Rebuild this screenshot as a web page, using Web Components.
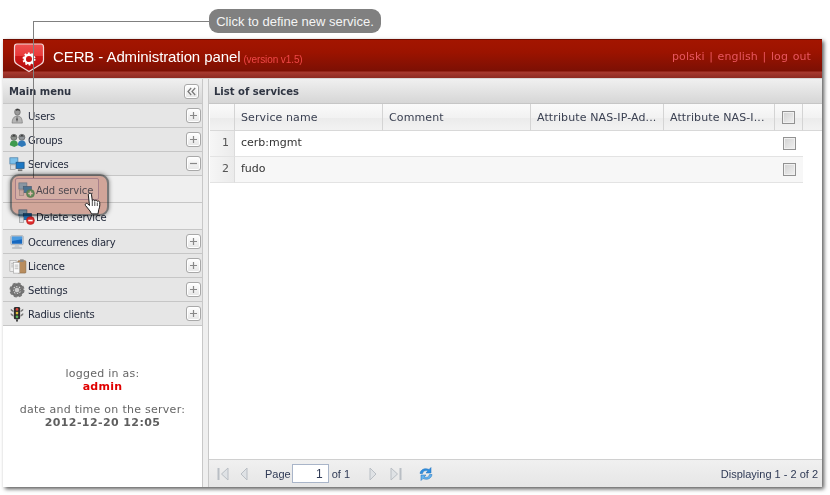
<!DOCTYPE html>
<html><head><meta charset="utf-8"><title>CERB</title>
<style>
html,body{margin:0;padding:0;background:#fff;width:830px;height:495px;overflow:hidden}
</style></head>
<body>
<cerb-app></cerb-app>
<script>
const ICONS={
users:`<svg width="18" height="18" viewBox="0 0 18 18"><ellipse cx="9.500" cy="4.500" rx="3.200" ry="3.600" fill="#9a9a9a" stroke="#555" stroke-width=".6"/><path d="M8 3.500c1-1.500 3-1 4 0v-1.500l-2-1-2 .5z" fill="#333"/><path d="M3.500 17c0-5 2-8 6-8s5.500 3 5.500 8z" fill="#b5b5b5" stroke="#666" stroke-width=".6"/><path d="M9 9l1 4-1 3-1-3z" fill="#555"/></svg>`,
groups:`<svg width="20" height="18" viewBox="0 0 20 18"><circle cx="5.500" cy="6" r="3.400" fill="#8a8f8a" stroke="#444" stroke-width=".6"/><circle cx="14.500" cy="6" r="3.400" fill="#8f9499" stroke="#444" stroke-width=".6"/><path d="M1 15c0-4 2-5.500 4.500-5.500S10 11 10 15l-4 2z" fill="#3f9a4d"/><path d="M10 15c0-4 2-5.500 4.500-5.500S19 11 19 15l-4.500 2z" fill="#2f78b8"/><path d="M3 5l2.500-2L8 5z M12 5l2.500-2L17 5z" fill="#333"/></svg>`,
services:`<svg width="18" height="18" viewBox="0 0 18 18"><rect x="1" y="2" width="9" height="7" fill="#7cc0ea" stroke="#4a7da6" stroke-width=".8"/><rect x="8" y="7" width="9" height="7" fill="#1c78c4" stroke="#1b4f80" stroke-width=".8"/><rect x="1.500" y="10" width="6" height="5" fill="#d8dde2" stroke="#888" stroke-width=".6"/><path d="M10 15h5v2h-5z" fill="#777"/></svg>`,
add:`<svg width="20" height="18" viewBox="0 0 20 18"><rect x="1" y="1" width="9" height="7" fill="#7cc0ea" stroke="#4a7da6" stroke-width=".8"/><rect x="6" y="5" width="9" height="7" fill="#1c78c4" stroke="#1b4f80" stroke-width=".8"/><rect x="1.500" y="9" width="5" height="6" fill="#d8dde2" stroke="#888" stroke-width=".6"/><circle cx="14" cy="13" r="4.500" fill="#3fa448" stroke="#2c7a33" stroke-width=".6"/><path d="M14 10.500v5M11.500 13h5" stroke="#fff" stroke-width="1.600"/></svg>`,
del:`<svg width="20" height="18" viewBox="0 0 20 18"><rect x="1" y="1" width="9" height="7" fill="#7cc0ea" stroke="#4a7da6" stroke-width=".8"/><rect x="6" y="5" width="9" height="7" fill="#1c78c4" stroke="#1b4f80" stroke-width=".8"/><rect x="1.500" y="9" width="5" height="6" fill="#d8dde2" stroke="#888" stroke-width=".6"/><circle cx="14" cy="13" r="4.500" fill="#e02b2b" stroke="#a61c1c" stroke-width=".6"/><path d="M11.500 13h5" stroke="#fff" stroke-width="1.800"/></svg>`,
diary:`<svg width="18" height="18" viewBox="0 0 18 18"><rect x="2" y="2" width="14" height="10" rx="1" fill="#dfe3e6" stroke="#8a9299" stroke-width=".7"/><rect x="3.200" y="3" width="11.600" height="8" fill="#1668c0"/><path d="M3.200 3h11.600v3L3.200 8z" fill="#4a9be0"/><path d="M7 12h4l1 3H6z" fill="#c8cccf"/><path d="M3.500 15h11v1.500h-11z" fill="#aeb3b7"/></svg>`,
licence:`<svg width="20" height="18" viewBox="0 0 20 18"><rect x="10" y="3" width="9" height="14" rx="1" fill="#b98d5e" stroke="#7a5a38" stroke-width=".6"/><rect x="12.500" y="1.500" width="4" height="3" fill="#888"/><rect x="1" y="3" width="7" height="12" fill="#eee" stroke="#999" stroke-width=".6"/><rect x="5" y="5" width="7" height="12" fill="#fafafa" stroke="#999" stroke-width=".6"/><path d="M6.500 8h4M6.500 10h4M6.500 12h4M2.500 6h2M2.500 8h2M2.500 10h2" stroke="#999" stroke-width=".7"/></svg>`,
settings:`<svg width="18" height="18" viewBox="0 0 18 18"><circle cx="9" cy="9" r="6" fill="none" stroke="#6e6e6e" stroke-width="3"/><circle cx="9" cy="9" r="6" fill="none" stroke="#777" stroke-width="5" stroke-dasharray="2.600 2.110"/><circle cx="9" cy="9" r="3.200" fill="#cfcfcf" stroke="#555" stroke-width=".8"/></svg>`,
radius:`<svg width="18" height="18" viewBox="0 0 18 18"><path d="M2 3l3 2v2L2 5zM16 3l-3 2v2l3-2zM2 8l3 2v2L2 10zM16 8l-3 2v2l3-2z" fill="#777"/><rect x="5.500" y="1" width="7" height="14" rx="1.500" fill="#2e2e2e"/><rect x="8" y="15" width="2" height="2.500" fill="#333"/><circle cx="9" cy="3.800" r="1.500" fill="#d9453a"/><circle cx="9" cy="8" r="1.500" fill="#e2c23b"/><circle cx="9" cy="12.200" r="1.500" fill="#5cb85c"/></svg>`
};

function el(name,cls){customElements.define(name,cls)}
function shadow(host,html){host.attachShadow({mode:'open'}).innerHTML=html}

el('cerb-logo',class extends HTMLElement{connectedCallback(){shadow(this,`<style>:host{display:block;width:32px;height:30px}svg{display:block}</style>
<svg width="32" height="30" viewBox="0 0 32 30"><defs><linearGradient id="s" x1="0" y1="0" x2="0" y2="1"><stop offset="0" stop-color="#f05050"/><stop offset=".42" stop-color="#e83a3a"/><stop offset=".43" stop-color="#d01818"/><stop offset="1" stop-color="#b00c0c"/></linearGradient></defs>
<path d="M4 1h24q2.500 0 2.500 3v13q0 3-3 4.500L16 28.500 4.500 21.500q-3-1.500-3-4.500V4Q1.500 1 4 1z" fill="url(#s)" stroke="#f3d9d9" stroke-width="1.200"/>
<circle cx="16" cy="16" r="4.200" fill="none" stroke="#fff" stroke-width="2.400"/><circle cx="16" cy="16" r="5.600" fill="none" stroke="#fff" stroke-width="1.800" stroke-dasharray="1.800 1.720"/><circle cx="15" cy="17" r="1.600" fill="#c01212"/></svg>`)}});

el('cerb-header',class extends HTMLElement{connectedCallback(){shadow(this,`<style>
:host{display:block;height:40px;box-sizing:border-box;border-top:1px solid #6e0d00;background:linear-gradient(#a31500 0,#9c1300 12px,#7c1004 31px,#a83a30 32px,#8d2a22 38px,#d8d8d8 38px)}
.r{display:flex;align-items:center;height:31px;padding:0 11px 0 10px}
.t{font:15px "Liberation Sans",Arial,sans-serif;color:#fff;margin-left:8px;position:relative;top:1px;letter-spacing:-.1px}
.v{font:10px "Liberation Sans",Arial,sans-serif;color:#f04848;margin-left:3px;position:relative;top:4px;letter-spacing:-.1px}
.sp{flex:1}.l{font:11px "DejaVu Sans",Verdana,sans-serif;color:#e8565e;letter-spacing:.01em;position:relative;top:1px;word-spacing:1px}
cerb-logo{position:relative;top:2px}
</style><div class="r"><cerb-logo></cerb-logo><span class="t">CERB - Administration panel</span><span class="v">(version v1.5)</span><span class="sp"></span><span class="l">polski | english | log out</span></div>`)}});

el('tool-btn',class extends HTMLElement{connectedCallback(){const k=this.getAttribute('kind');
const g=k==='plus'?'<path d="M6.500 3v7M3 6.500h7" stroke="#888" stroke-width="1.200"/>':k==='minus'?'<path d="M3 6.500h7" stroke="#888" stroke-width="1.200"/>':'<path d="M6.200 3L3 6.500 6.200 10M10.200 3L7 6.500l3.200 3.500" stroke="#777" stroke-width="1.200" fill="none"/>';
shadow(this,`<style>:host{display:block;width:13px;height:13px;border:1px solid #a8a8a8;border-radius:3px;background:linear-gradient(#fff,#e6e6e6);box-shadow:inset 0 0 0 1px #fff}svg{display:block}</style><svg width="13" height="13" viewBox="0 0 13 13">${g}</svg>`)}});

el('menu-row',class extends HTMLElement{connectedCallback(){const i=this.getAttribute('icon'),t=this.getAttribute('toggle');
shadow(this,`<style>
:host{display:flex;align-items:center;height:23px;box-sizing:content-box;border-bottom:1px solid #c6c6c6;background:#e6e6e6;font:10px "DejaVu Sans",Verdana,sans-serif;letter-spacing:-.2px;color:#1f2638;padding-left:6px}
.i{width:19px;height:16px;flex:none;display:flex}.i svg{height:16px;width:auto}.x{flex:1;padding-top:2px}
tool-btn{margin-right:1px}
</style><span class="i">${ICONS[i]}</span><span class="x"><slot></slot></span><tool-btn kind="${t}"></tool-btn>`)}});

el('sub-row',class extends HTMLElement{connectedCallback(){const i=this.getAttribute('icon');
shadow(this,`<style>
:host{display:flex;align-items:center;box-sizing:border-box;border-bottom:1px solid #c6c6c6;background:#efefef;font:10px "DejaVu Sans",Verdana,sans-serif;letter-spacing:-.1px;color:#1f2638;padding:2px 0 0 15px}
.i{width:18px;height:16px;flex:none;display:flex}.i svg{height:16px;width:auto}
</style><span class="i">${ICONS[i]}</span><slot></slot>`)}});

el('side-bar',class extends HTMLElement{connectedCallback(){shadow(this,`<style>
:host{display:flex;flex-direction:column;width:200px;flex:none;background:#fff;border-right:1px solid #c8c8c8;box-sizing:border-box}
.h{border-bottom:1px solid #c6c6c6;background:linear-gradient(#f0f0f0,#d6d6d6);display:flex;align-items:center;padding:1px 3px 0 6px;box-sizing:border-box;height:25px;font:bold 10px "DejaVu Sans",Verdana,sans-serif;color:#2f3542;justify-content:space-between}
.h tool-btn{margin-top:-1px}
.info{flex:1;display:flex;flex-direction:column;align-items:center;padding-top:41px;font:11px/13px "DejaVu Sans",Verdana,sans-serif;letter-spacing:.27px;color:#666;text-align:center}
.a{color:#e00000;font-weight:bold}.d{font-weight:bold;color:#5f5f5f;letter-spacing:.4px}.g{margin-top:10px}
sub-row.one{height:27px}sub-row.two{height:27px}
</style>
<div class="h"><span>Main menu</span><tool-btn kind="collapse"></tool-btn></div>
<menu-row icon="users" toggle="plus">Users</menu-row>
<menu-row icon="groups" toggle="plus">Groups</menu-row>
<menu-row icon="services" toggle="minus">Services</menu-row>
<sub-row class="one" icon="add">Add service</sub-row>
<sub-row class="two" icon="del">Delete service</sub-row>
<menu-row icon="diary" toggle="plus">Occurrences diary</menu-row>
<menu-row icon="licence" toggle="plus">Licence</menu-row>
<menu-row icon="settings" toggle="plus">Settings</menu-row>
<menu-row icon="radius" toggle="plus">Radius clients</menu-row>
<div class="info"><span>logged in as:</span><span class="a">admin</span><span class="g">date and time on the server:</span><span class="d">2012-12-20 12:05</span></div>`)}});

el('check-box',class extends HTMLElement{connectedCallback(){shadow(this,`<style>:host{display:block;width:11px;height:11px;border:1px solid #929292;background:linear-gradient(135deg,#d2d2d2,#f0f0f0);box-shadow:inset 0 0 0 1px #f0f0f0}</style>`)}});

el('data-grid',class extends HTMLElement{connectedCallback(){
const cols='25px 148px 148px 133px 111px 28px 19px';
const hs=['','Service name','Comment','Attribute NAS-IP-Ad...','Attribute NAS-I...'];
shadow(this,`<style>
:host{display:block;flex:1;background:#fff;padding-left:1px;font:11px "DejaVu Sans",Verdana,sans-serif;color:#333}
.g{display:grid;grid-template-columns:${cols}}
.hd{height:27px;background:linear-gradient(#fafafa 0,#f2f2f2 50%,#ebebeb 50%,#f3f3f3 100%)}
.hd>div{display:flex;align-items:center;padding:1px 0 0 6px;border-right:1px solid #d4d4d4;border-bottom:1px solid #d8d8d8;box-sizing:border-box;white-space:nowrap;overflow:hidden;color:#3b4152;letter-spacing:.01em}
.hd>div:last-child{border-right:0;padding:0}
.hd>div.c,.row>div.c{justify-content:center;padding:0}
.row{height:26px;grid-template-columns:25px 148px 392px 28px;width:593px}
.row>div{display:flex;align-items:center;box-sizing:border-box;border-bottom:1px solid #e3e3e3;padding:0 0 2px 6px}
.row>div.n{justify-content:flex-end;padding:0 5px 2px 0;background:linear-gradient(90deg,#f6f6f6,#ebebeb);border-right:1px solid #dcdcdc;color:#555}
.row.alt>div:not(.n){background:#f7f7f7}
</style>
<div class="g hd">${hs.map(h=>`<div>${h}</div>`).join('')}<div class="c"><check-box></check-box></div><div></div></div>
<div class="g row"><div class="n">1</div><div>cerb:mgmt</div><div></div><div class="c"><check-box></check-box></div></div>
<div class="g row alt"><div class="n">2</div><div>fudo</div><div></div><div class="c"><check-box></check-box></div></div>`)}});

el('grid-pager',class extends HTMLElement{connectedCallback(){
const c='#b9bec4';
shadow(this,`<style>
:host{display:flex;align-items:center;height:27px;border-top:1px solid #d0d0d0;background:linear-gradient(#f0f0f0,#e6e6e6);font:11px "Liberation Sans",Arial,sans-serif;color:#2f3a55;padding:0 4px 0 8px;box-sizing:content-box}
svg{display:block;flex:none}
.in{width:37px;height:19px;box-sizing:border-box;border:1px solid #a9b5c9;background:#fff;text-align:right;padding:2px 5px;line-height:14px;margin:0 3px 0 1px;font-size:12px}
.sp{flex:1}
</style>
<svg width="12" height="14" viewBox="0 0 12 14"><path d="M1.500 1v12" stroke="${c}" stroke-width="2"/><path d="M11 1L4.500 7l6.500 6z" fill="#dfe2e5" stroke="${c}"/></svg>
<svg width="8" height="14" viewBox="0 0 8 14" style="margin-left:11px"><path d="M7 1L1 7l6 6z" fill="#dfe2e5" stroke="${c}"/></svg>
<span style="margin-left:17px">Page</span><span class="in">1</span><span>of 1</span>
<svg width="8" height="14" viewBox="0 0 8 14" style="margin-left:19px"><path d="M1 1l6 6-6 6z" fill="#dfe2e5" stroke="${c}"/></svg>
<svg width="12" height="14" viewBox="0 0 12 14" style="margin-left:13px"><path d="M1 1l6.500 6L1 13z" fill="#dfe2e5" stroke="${c}"/><path d="M10.500 1v12" stroke="${c}" stroke-width="2"/></svg>
<svg width="16" height="16" viewBox="0 0 16 16" style="margin-left:16px"><path d="M2 7.500C2.500 3.500 7 1.500 11 3.500L13 1.500V7H8l1.800-2C7.500 4 5 5 4.500 7.500z" fill="#2f8fe0" stroke="#1f6fb8" stroke-width=".5"/><path d="M14 8.500C13.500 12.500 9 14.500 5 12.500L3 14.500V9h5l-1.800 2C8.500 12 11 11 11.500 8.500z" fill="#63b3ee" stroke="#1f6fb8" stroke-width=".5"/></svg>
<span class="sp"></span><span>Displaying 1 - 2 of 2</span>`)}});

el('main-panel',class extends HTMLElement{connectedCallback(){shadow(this,`<style>
:host{display:flex;flex-direction:column;flex:1;min-width:0;background:#fff;box-sizing:border-box;border-left:1px solid #c8c8c8}
.h{height:25px;box-sizing:border-box;flex:none;border-bottom:1px solid #c6c6c6;background:linear-gradient(#f0f0f0,#d6d6d6);display:flex;align-items:center;padding:1px 0 0 5px;font:bold 10px "DejaVu Sans",Verdana,sans-serif;color:#2f3542}
</style><div class="h">List of services</div><data-grid></data-grid><grid-pager></grid-pager>`)}});

el('call-out',class extends HTMLElement{connectedCallback(){shadow(this,`<style>
:host{position:absolute;left:209px;top:9px;width:172px;height:24px;box-sizing:border-box;border-radius:9px;background:#808080;color:#f4f4f4;font:13px "Liberation Sans",Arial,sans-serif;display:flex;align-items:center;justify-content:center;white-space:nowrap}
</style><slot></slot>`)}});

el('cerb-app',class extends HTMLElement{connectedCallback(){shadow(this,`<style>
:host{display:block;position:relative;width:830px;height:495px;padding:39px 8px 8px 3px;box-sizing:border-box}
.w{display:flex;flex-direction:column;height:100%;width:819px;box-shadow:2px 2px 4px rgba(0,0,0,.65);background:#fff}
.b{display:flex;flex:1;min-height:0}
.split{width:5px;flex:none;background:#efefef}
.lh{position:absolute;left:33px;top:21px;width:176px;height:1px;background:#808080}
.lv{position:absolute;left:33px;top:21px;width:1px;height:157px;background:#808080}
.hl{position:absolute;left:10px;top:174px;width:99px;height:42px;box-sizing:border-box;border:2px solid #7f7f7f;border-radius:9px;background:#dfb0a3;mix-blend-mode:multiply;box-shadow:0 0 4px rgba(0,0,0,.5)}
.sel{position:absolute;left:15px;top:178px;width:84px;height:22px;box-sizing:border-box;border:1px solid #a8808a;border-radius:2px;background:rgba(225,205,205,.25)}
.hand{position:absolute;left:84px;top:192px}
</style>
<div class="w"><cerb-header></cerb-header><div class="b"><side-bar></side-bar><div class="split"></div><main-panel></main-panel></div></div>
<div class="lh"></div><div class="lv"></div>
<div class="hl"></div><div class="sel"></div>
<svg class="hand" width="22" height="24" viewBox="0 0 22 24"><path d="M5 1.500c1.200-.8 2.300 0 2.500 1.200l.8 6c.4-1.200 2.200-1.200 2.500.2.500-1 2.200-.8 2.500.5.600-.8 2.200-.5 2.400 1 .3 2.500 0 5-.9 7l-.8 4.500H7.500L6 19 1.500 13.500c-.8-1.500.8-2.800 2-1.800L5.500 13.500 4.300 3c-.1-.6.200-1.200.7-1.500z" fill="#fff" stroke="#1a1a1a" stroke-width="1"/><path d="M8.300 9v5M10.800 9.500v4.500M13.300 10.500v3.500" stroke="#1a1a1a" stroke-width=".8"/></svg>
<call-out>Click to define new service.</call-out>`)}});
</script>
</body></html>
